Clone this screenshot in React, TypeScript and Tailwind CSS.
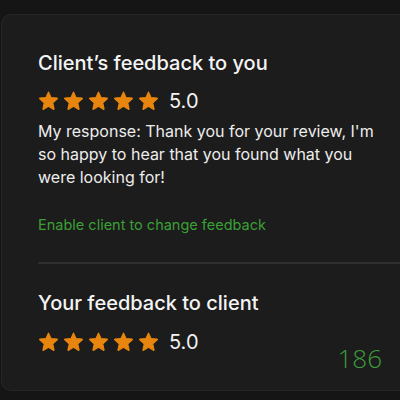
import React from 'react';

const Star = () => (
  <svg viewBox="0 0 24 24" className="w-[21px] h-[21px]" fill="#e8850f">
    <path
      d="M12 2.2l2.9 6.3 6.8.7c.5.1.7.7.3 1l-5.1 4.6 1.5 6.7c.1.5-.4.9-.9.6L12 18.6l-5.5 3.5c-.5.3-1-.1-.9-.6l1.5-6.7-5.1-4.6c-.4-.3-.2-.9.3-1l6.8-.7L12 2.2z"
      stroke="#e8850f"
      strokeWidth="1.2"
      strokeLinejoin="round"
    />
  </svg>
);

function Rating({ value }: { value: string }) {
  return (
    <div className="flex items-center">
      <div className="flex gap-[4px]">
        {[0, 1, 2, 3, 4].map((i) => (
          <Star key={i} />
        ))}
      </div>
      <span className="ml-[10px] text-[20px] leading-none text-[#f2f2f2]">{value}</span>
    </div>
  );
}

export default function App() {
  return (
    <div
      className="w-[400px] h-[400px] bg-[#151515] pt-[14px] overflow-hidden"
      style={{ fontFamily: 'Inter, "Liberation Sans", Arial, sans-serif' }}
    >
      <div className="h-[377px] ml-[1px] rounded-l-[10px] bg-[#1c1c1c] border-t border-l border-b border-[#262626]">
        <div className="pl-[36px] pt-[36px]">
          <h2 className="text-[20px] leading-[24px] font-medium text-[#f4f4f4]">
            Client’s feedback to you
          </h2>
          <div className="mt-[15px]">
            <Rating value="5.0" />
          </div>
          <p className="mt-[9px] pr-[20px] text-[16px] leading-[23px] text-[#ededed]">
            My response: Thank you for your review, I'm so happy to hear that you found what you
            were looking for!
          </p>
          <p className="mt-[27px] text-[14.5px] leading-[18px] text-[#3aa035]">
            Enable client to change feedback
          </p>
        </div>
        <div className="ml-[36px] mt-[28px] h-[2px] bg-[#2e2e2e]" />
        <div className="pl-[36px] pt-[27px] pr-[18px]">
          <h2 className="text-[20px] leading-[24px] font-medium text-[#f4f4f4]">
            Your feedback to client
          </h2>
          <div className="mt-[16px]">
            <Rating value="5.0" />
          </div>
          <div className="flex justify-end -mt-[8px]">
            <span
              className="text-[26px] leading-[28px] text-[#3d9e3d]"
              style={{ fontFamily: '"Open Sans", sans-serif', fontWeight: 300 }}
            >
              186
            </span>
          </div>
        </div>
      </div>
    </div>
  );
}
